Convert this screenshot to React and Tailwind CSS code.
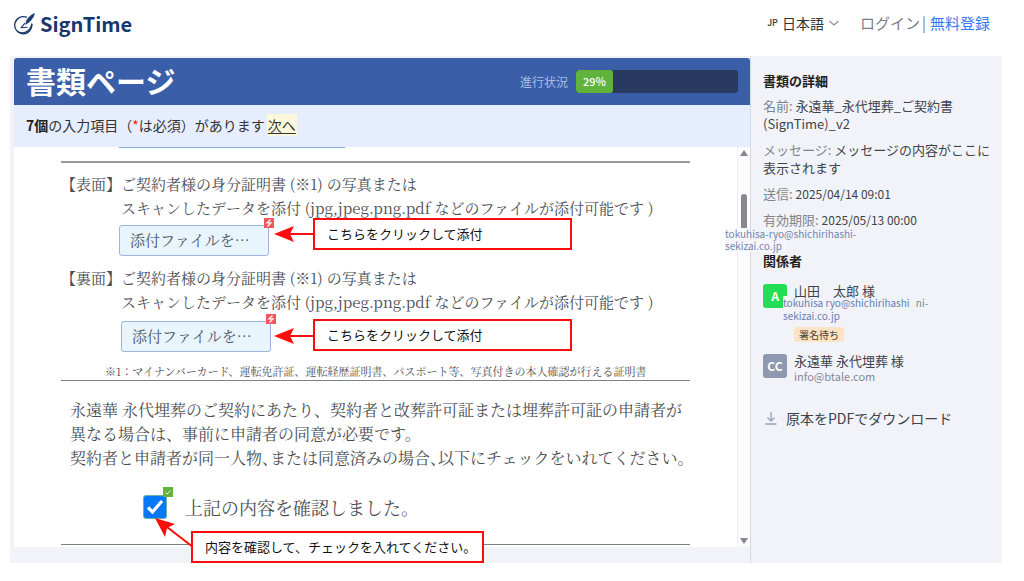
import React, { useState } from 'react';

const recipients = [
  { initials: 'A', name: '山田　太郎 様', email: '', status: '署名待ち', color: 'bg-[#22dd55]' },
  { initials: 'CC', name: '永遠華 永代埋葬 様', email: 'info@btale.com', status: '', color: 'bg-[#8e99b0]' },
];

function Logo() {
  return (
    <a href="#" className="flex items-center gap-1 text-[#17386f]">
      <svg width="22" height="24" viewBox="0 0 22 24" fill="none">
        <path d="M12.500 5.200A8.600 8.600 0 1 0 17.800 12" stroke="currentColor" strokeWidth="1.300" strokeLinecap="round" />
        <path d="M4 19.800c5 2.600 12.500 0 13.800-7.800" stroke="currentColor" strokeWidth="1.400" />
        <path d="M20.600 1.500c-3.200.900-6.300 3.800-8 7l-1.100 3.900 3.100-2c2.800-2 5-5.300 6-8.900z" fill="currentColor" stroke="currentColor" strokeWidth=".5" />
        <path d="M11 11.200L7 15.800l6.500-.600" stroke="currentColor" strokeWidth="1.100" strokeLinejoin="round" />
      </svg>
      <span className="font-['Noto_Sans_CJK_JP',sans-serif] text-xl leading-6 font-bold">SignTime</span>
    </a>
  );
}

function Header() {
  return (
    <header className="flex h-14 items-start justify-between pt-3 pr-[34px] pl-[14px]">
      <Logo />
      <nav className="flex items-center text-[15px] leading-[22px]">
        <button type="button" className="flex items-center text-sm text-[#333]">
          <span className="mr-1 text-[9px] font-medium">JP</span>
          日本語
          <svg width="12" height="8" viewBox="0 0 12 8" fill="none" className="ml-1">
            <path d="M1.500 2l4.500 4 4.500-4" stroke="#8a8f98" strokeWidth="1.200" />
          </svg>
        </button>
        <a href="#" className="ml-5 text-[#7a7f87]">ログイン</a>
        <span className="mr-1 ml-[2px] text-[#7a7f87]">|</span>
        <a href="#" className="text-[#3478f0]">無料登録</a>
      </nav>
    </header>
  );
}

function Callout({ children, className }) {
  return (
    <div className={`absolute z-10 flex h-8 items-center border-2 border-[#fb0d0d] bg-white font-['Noto_Sans_CJK_JP',sans-serif] text-[13px] whitespace-nowrap text-[#111] ${className}`}>
      {children}
    </div>
  );
}

function Attachment({ side, offset }) {
  return (
    <div>
      <div className="flex text-[15px] leading-6">
        <div className="w-15 shrink-0 whitespace-nowrap">【{side}】</div>
        <div className="whitespace-nowrap">
          <p>ご契約者様の身分証明書 (※1) の写真または</p>
          <p>スキャンしたデータを添付 (jpg,jpeg.png.pdf などのファイルが添付可能です )</p>
        </div>
      </div>
      <div className={`flex ${offset}`}>
        <button type="button" className="relative h-[31px] w-[150px] rounded-[3px] border border-[#9db4df] bg-[#e8f5fe] pl-[10px] text-left text-[15px] text-[#4f565f]">
          添付ファイルを⋯
          <span className="absolute -top-2 -right-[6px] flex h-[10px] w-[10px] items-center justify-center bg-[#f2555a]">
            <svg width="8" height="8" viewBox="0 0 8 8" fill="none">
              <path d="M5.500.5L2 3.800h4L2.500 7.500" stroke="#fff" strokeWidth="1.200" />
            </svg>
          </span>
        </button>
      </div>
    </div>
  );
}

function ArrowLeft({ className }) {
  return (
    <svg width="41" height="18" viewBox="0 0 41 18" className={`absolute z-10 ${className}`}>
      <path d="M12 9h29" stroke="#fb0d0d" strokeWidth="2" />
      <path d="M0 9l20-8-4 8 4 8z" fill="#fb0d0d" />
    </svg>
  );
}

function DocumentView() {
  const [checked, setChecked] = useState(true);

  return (
    <div className="min-w-0 flex-1 pr-[47px] pb-[2px] pl-[47px] font-['Noto_Serif_CJK_JP','Liberation_Serif','Noto_Sans_CJK_JP',serif] text-[#4a4d52]">
      <div className="ml-[58px] h-px w-[226px] bg-[#8eaadf]" />
      <hr className="mt-[13px] border-t-2 border-[#96999f]" />

      <div className="relative mt-[9px]">
        <Attachment side="表面" offset="mt-[5px] ml-[58px]" />
        <ArrowLeft className="top-[53px] left-[213px]" />
        <Callout className="top-[46px] left-[252px] w-[259px] pl-3">こちらをクリックして添付</Callout>
      </div>
      <div className="relative mt-[10px]">
        <Attachment side="裏面" offset="mt-[7px] ml-[60px]" />
        <ArrowLeft className="top-[61px] left-[213px]" />
        <Callout className="top-[53px] left-[252px] w-[259px] pl-3">こちらをクリックして添付</Callout>
      </div>

      <p className="mt-[10px] ml-11 text-[11px] leading-[18px] whitespace-nowrap">
        ※1：マイナンバーカード、運転免許証、運転経歴証明書、パスポート等、写真付きの本人確認が行える証明書
      </p>
      <hr className="border-[#7d8086]" />

      <div className="mt-[17px] ml-[9px] text-base leading-6 whitespace-nowrap">
        <p>永遠華 永代埋葬のご契約にあたり、契約者と改葬許可証または埋葬許可証の申請者が</p>
        <p>異なる場合は、事前に申請者の同意が必要です。</p>
        <p className="[font-feature-settings:'halt']">契約者と申請者が同一人物、または同意済みの場合、以下にチェックをいれてください。</p>
      </div>

      <div className="relative mt-5 flex h-[34px] items-center pl-[82px]">
        <div className="relative h-6 w-6">
          <input
            id="confirm"
            type="checkbox"
            checked={checked}
            onChange={(e) => setChecked(e.target.checked)}
            className="block h-6 w-6 appearance-none rounded-[3px] border border-[#6fb0a8] bg-white checked:bg-[#0878fb]"
          />
          {checked && (
            <svg width="24" height="24" viewBox="0 0 24 24" fill="none" className="pointer-events-none absolute inset-0">
              <path d="M5 12.500l4.500 4.500L19 6" stroke="#fff" strokeWidth="3.200" />
            </svg>
          )}
          <span className="absolute -top-2 -right-[6px] flex h-[10px] w-[10px] items-center justify-center bg-[#62b33b]">
            <svg width="8" height="8" viewBox="0 0 8 8" fill="none">
              <path d="M1.500 4.500l1.500 1.500 3.500-3.500" stroke="#fff" strokeWidth="1" />
            </svg>
          </span>
        </div>
        <label htmlFor="confirm" className="ml-[18px] text-lg leading-6 whitespace-nowrap">上記の内容を確認しました。</label>
        <svg width="38" height="30" viewBox="0 0 38 30" className="absolute top-[28px] left-[94px] z-10">
          <path d="M8 6l30 23" stroke="#fb0d0d" strokeWidth="2" />
          <path d="M0 0l20 6-8 4-2 9z" fill="#fb0d0d" />
        </svg>
        <Callout className="top-[41px] left-[130px] w-[293px] pl-3">内容を確認して、チェックを入れてください。</Callout>
      </div>
      <hr className="mt-5 border-[#7d8086]" />
    </div>
  );
}

function Scrollbar() {
  return (
    <div className="flex w-[13px] shrink-0 flex-col items-center border-l border-[#eceef2] bg-[#fcfcfd] py-[3px]">
      <svg width="8" height="6" viewBox="0 0 8 6"><path d="M4 0l4 6H0z" fill="#85878b" /></svg>
      <div className="mt-[38px] h-9 w-[6px] rounded-full bg-[#88898c]" />
      <svg width="8" height="6" viewBox="0 0 8 6" className="mt-auto"><path d="M0 0h8L4 6z" fill="#85878b" /></svg>
    </div>
  );
}

function Detail({ label, children }) {
  return (
    <p>
      <span className="text-[#7f858f]">{label}:</span> {children}
    </p>
  );
}

function Sidebar() {
  return (
    <aside className="relative w-[252px] shrink-0 border-l border-[#d5d9e6] pt-4 pr-2 pl-3 text-[13px] leading-[18px] text-[#3f434a]">
      <h2 className="font-bold text-[#222]">書類の詳細</h2>
      <div className="mt-[7px] flex flex-col gap-2">
        <Detail label="名前">永遠華_永代埋葬_ご契約書<br />(SignTime)_v2</Detail>
        <Detail label="メッセージ">メッセージの内容がここに表示されます</Detail>
        <Detail label="送信"><span className="text-xs">2025/04/14 09:01</span></Detail>
        <Detail label="有効期限"><span className="text-xs">2025/05/13 00:00</span></Detail>
      </div>

      <div className="absolute top-[172px] -left-[26px] z-10 text-[10px] leading-3 text-[#7285b0]">
        <p className="w-[25px] bg-[#f9fafd] whitespace-nowrap">tokuhisa-ryo@shichirihashi-</p>
        <p className="w-[62px] bg-[#f5f6fb] whitespace-nowrap">sekizai.co.jp</p>
      </div>

      <h2 className="mt-[23px] font-bold text-[#222]">関係者</h2>
      <ul className="relative mt-3">
        {recipients.map((r) => (
          <li key={r.initials} className="mb-[10px] flex gap-[7px]">
            <span className={`mt-[2px] flex h-6 w-6 shrink-0 items-center justify-center rounded-[3px] text-xs font-bold text-white ${r.color}`}>
              {r.initials}
            </span>
            <div>
              <p className="leading-[18px]">{r.name}</p>
              {r.email && <p className="text-[11px] leading-3 text-[#848a95]">{r.email}</p>}
              {r.status && (
                <span className="mt-[27px] block w-fit rounded-[3px] bg-[#fee3c5] px-[5px] text-[10px] leading-[15px] text-[#4c4032]">
                  {r.status}
                </span>
              )}
            </div>
          </li>
        ))}
        <li className="absolute top-[14px] left-5 text-[10px] leading-[13px] text-[#6580b4]">
          <p className="w-1 bg-[#f1f3f8] whitespace-nowrap">tokuhisa ryo@shichirihashi <span className="ml-1 text-[#7f858f]">ni-</span></p>
          <p className="w-1 whitespace-nowrap">sekizai.co.jp</p>
        </li>
      </ul>

      <a href="#" className="mt-[26px] flex items-center gap-[7px] text-sm leading-5">
        <svg width="16" height="16" viewBox="0 0 16 16" fill="none" stroke="#96a2b8" strokeWidth="1.300">
          <path d="M8 2v9M4.500 7.500L8 11l3.500-3.500M2.500 14h11" />
        </svg>
        原本をPDFでダウンロード
      </a>
    </aside>
  );
}

export default function App() {
  return (
    <div className="min-h-screen bg-white font-['Noto_Sans_CJK_JP',sans-serif]">
      <Header />
      <div className="mr-[22px] ml-[10px] flex bg-[#f1f3f8]">
        <main className="min-w-0 flex-1 pt-[2px] pb-4 pl-1">
          <div className="flex h-[47px] items-center justify-between rounded-t-[3px] bg-[#3b5ea8] pr-3 pl-3">
            <h1 className="pb-1 text-[30px] leading-10 font-bold text-white">書類ページ</h1>
            <div className="flex items-center gap-2 text-xs text-[#a9bce6]">
              進行状況
              <div className="h-[23px] w-[162px] overflow-hidden rounded-[3px] bg-[#293a60]">
                <div className="flex h-full w-[37px] items-center justify-center rounded-[3px] bg-[#62b33b] text-[11px] font-medium text-white">29%</div>
              </div>
            </div>
          </div>
          <div className="flex h-[42px] items-center bg-[#e6edfe] pb-[2px] pl-3 text-sm text-[#333]">
            <p>
              <b className="text-[#222]">7個</b>の入力項目（<span className="text-[#f01c1c]">*</span>は必須）があります
            </p>
            <a href="#" className="ml-[2px] bg-[#fcf8dc] px-px leading-[22px] underline underline-offset-2">次へ</a>
          </div>
          <div className="flex bg-white">
            <DocumentView />
            <Scrollbar />
          </div>
        </main>
        <Sidebar />
      </div>
    </div>
  );
}
